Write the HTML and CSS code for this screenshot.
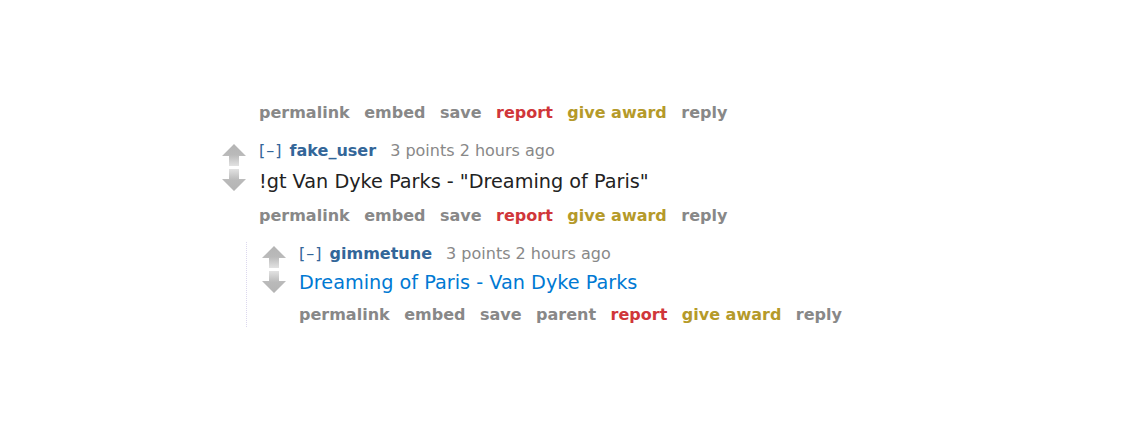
FILE: index.html
```html
<!DOCTYPE html>
<html>
<head>
<meta charset="utf-8">
<link rel="stylesheet" href="styles.css">
</head>
<body>
<div class="thread">
  <ul class="actions top-actions">
    <li><a class="act">permalink</a></li>
    <li><a class="act">embed</a></li>
    <li><a class="act">save</a></li>
    <li><a class="act report">report</a></li>
    <li><a class="act award">give award</a></li>
    <li><a class="act">reply</a></li>
  </ul>

  <div class="comment parent-comment">
    <div class="votes">
      <svg class="arrow" width="24" height="22" viewBox="0 0 24 22"><defs><linearGradient id="gu1" x1="0" y1="0" x2="0" y2="1"><stop offset="0" stop-color="#b4b4b4"/><stop offset="0.5" stop-color="#bababa"/><stop offset="1" stop-color="#e2e2e2"/></linearGradient></defs><path d="M12 0 L24 12 L17 12 L17 22 L7 22 L7 12 L0 12 Z" fill="url(#gu1)"/></svg>
      <svg class="arrow" width="24" height="22" viewBox="0 0 24 22"><defs><linearGradient id="gd1" x1="0" y1="0" x2="0" y2="1"><stop offset="0" stop-color="#e2e2e2"/><stop offset="0.5" stop-color="#bababa"/><stop offset="1" stop-color="#b4b4b4"/></linearGradient></defs><path d="M7 0 L17 0 L17 10 L24 10 L12 22 L0 10 L7 10 Z" fill="url(#gd1)"/></svg>
    </div>
    <div class="entry">
      <p class="tagline"><a class="expand">[–]</a> <a class="author">fake_user</a> <span class="score">3 points</span> <time>2 hours ago</time></p>
      <div class="md"><p>!gt Van Dyke Parks - "Dreaming of Paris"</p></div>
      <ul class="actions">
        <li><a class="act">permalink</a></li>
        <li><a class="act">embed</a></li>
        <li><a class="act">save</a></li>
        <li><a class="act report">report</a></li>
        <li><a class="act award">give award</a></li>
        <li><a class="act">reply</a></li>
      </ul>
    </div>
  </div>

  <div class="child">
    <div class="comment">
      <div class="votes">
        <svg class="arrow" width="24" height="22" viewBox="0 0 24 22"><defs><linearGradient id="gu2" x1="0" y1="0" x2="0" y2="1"><stop offset="0" stop-color="#b4b4b4"/><stop offset="0.5" stop-color="#bababa"/><stop offset="1" stop-color="#e2e2e2"/></linearGradient></defs><path d="M12 0 L24 12 L17 12 L17 22 L7 22 L7 12 L0 12 Z" fill="url(#gu2)"/></svg>
        <svg class="arrow" width="24" height="22" viewBox="0 0 24 22"><defs><linearGradient id="gd2" x1="0" y1="0" x2="0" y2="1"><stop offset="0" stop-color="#e2e2e2"/><stop offset="0.5" stop-color="#bababa"/><stop offset="1" stop-color="#b4b4b4"/></linearGradient></defs><path d="M7 0 L17 0 L17 10 L24 10 L12 22 L0 10 L7 10 Z" fill="url(#gd2)"/></svg>
      </div>
      <div class="entry">
        <p class="tagline"><a class="expand">[–]</a> <a class="author">gimmetune</a> <span class="score">3 points</span> <time>2 hours ago</time></p>
        <div class="md"><p><a class="song">Dreaming of Paris - Van Dyke Parks</a></p></div>
        <ul class="actions">
          <li><a class="act">permalink</a></li>
          <li><a class="act">embed</a></li>
          <li><a class="act">save</a></li>
          <li><a class="act">parent</a></li>
          <li><a class="act report">report</a></li>
          <li><a class="act award">give award</a></li>
          <li><a class="act">reply</a></li>
        </ul>
      </div>
    </div>
  </div>
</div>
</body>
</html>
```

FILE: styles.css
```css
html, body {
  margin: 0;
  padding: 0;
  background: #ffffff;
}

body {
  font-family: "DejaVu Sans", Verdana, sans-serif;
  color: #222222;
}

.thread {
  padding: 101px 0 0 222px;
}

.actions {
  list-style: none;
  margin: 0;
  padding: 0;
  display: flex;
  gap: 14.5px;
  font-family: "DejaVu Sans", Verdana, sans-serif;
  font-weight: bold;
  font-size: 16px;
  line-height: 24px;
}

.top-actions {
  margin-left: 37px;
}

.act {
  color: #888888;
  text-decoration: none;
}

.act.report {
  color: #d0363a;
}

.act.award {
  color: #b59a2a;
}

.comment {
  display: flex;
}

.parent-comment {
  margin-top: 14px;
}

.votes {
  width: 37px;
  display: flex;
  flex-direction: column;
  gap: 3px;
  padding-top: 5px;
}

.arrow {
  display: block;
}

.entry {
  display: flex;
  flex-direction: column;
}

.tagline {
  margin: 0;
  font-size: 16px;
  line-height: 24px;
  color: #888888;
}

.expand {
  color: #336699;
  letter-spacing: 1px;
}

.author {
  color: #336699;
  font-weight: bold;
  margin: 0 9px 0 2px;
}

.md p {
  margin: 0;
  font-size: 19.25px;
  line-height: 34px;
  color: #222222;
}

.parent-comment .md {
  margin-top: 2px;
}

.parent-comment .md + .actions {
  margin-top: 5px;
}

.child .md + .actions {
  margin-top: 3px;
}

.song {
  color: #0079d3;
}

.child {
  margin-left: 24px;
  margin-top: 14px;
  border-left: 1px dotted #dcd8ee;
  padding-left: 15px;
}

.child .votes {
  padding-top: 4px;
}
```
